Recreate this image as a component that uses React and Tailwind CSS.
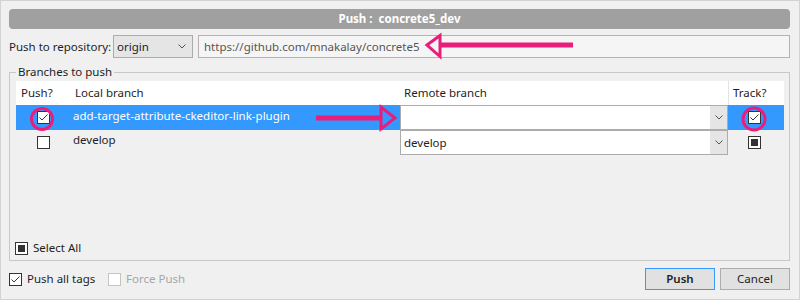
const PINK = '#e91e7b'

function Chevron() {
  return (
    <svg width="8" height="5" viewBox="0 0 8 5" className="block">
      <path d="M0.5 0.5 L4 4 L7.5 0.5" fill="none" stroke="#555" strokeWidth="1" />
    </svg>
  )
}

// Win10-style 13px checkbox: state = 'on' | 'off' | 'mixed'
function Check({ state = 'off', disabled = false }) {
  return (
    <span
      className={`relative w-[13px] h-[13px] shrink-0 border bg-white flex items-center justify-center ${
        disabled ? 'border-[#c4c4c4]' : 'border-[#333]'
      }`}
    >
      {state === 'on' && (
        <svg width="11" height="11" viewBox="0 0 11 11" className="block">
          <path d="M1.5 5.5 L4 8 L9.5 2.5" fill="none" stroke="#333" strokeWidth="1" />
        </svg>
      )}
      {state === 'mixed' && <span className="w-[7px] h-[7px] bg-[#333]" />}
    </span>
  )
}

function Combo({ value }) {
  return (
    <div className="h-full flex border border-[#acacac] bg-white">
      <div className="flex-1 flex items-center pl-[3px]">{value}</div>
      <div className="w-[17px] bg-[#e5e5e5] flex items-center justify-center">
        <Chevron />
      </div>
    </div>
  )
}

export default function App() {
  return (
    <div className="relative w-[800px] h-[300px] bg-[#f0f0f0] border border-[#d2d2d2] pl-[8px] pr-[9px] pt-[8px] text-[11.5px] leading-[16px] text-[#1e1e1e] whitespace-nowrap font-['Noto_Sans',sans-serif]">
      {/* Title */}
      <div className="h-[20px] rounded-[4px] bg-[#a0a0a0] flex items-center justify-center text-white font-bold whitespace-pre">
        {'Push :  concrete5_dev'}
      </div>

      {/* Repository row */}
      <div className="mt-[6px] h-[23px] flex items-center">
        <span className="w-[104px]">Push to repository:</span>
        <div className="w-[80px] h-full border border-[#acacac] bg-[#e5e5e5] flex items-center justify-between pl-[3px] pr-[6px]">
          <span>origin</span>
          <Chevron />
        </div>
        <div className="flex-1 ml-[5px] h-full border border-[#b4b4b4] bg-[#f5f5f5] flex items-center pl-[5px] text-[#555]">
          https://github.com/mnakalay/concrete5
        </div>
      </div>

      {/* Branches group */}
      <fieldset className="mt-[6px] h-[197px] border border-[#c8c8c8] pl-[6px] pr-[5px] pb-[6px]">
        <legend className="px-[2px]">Branches to push</legend>
        <div className="h-[180px] flex flex-col pt-px">
          <div className="h-[24px] bg-white flex items-center">
            <div className="w-[54px] pl-[5px]">Push?</div>
            <div className="w-[330px] pl-[5px]">Local branch</div>
            <div className="w-[328px] pl-[4px]">Remote branch</div>
            <div className="flex-1 h-full border-l border-[#e3e3e3] flex items-center pl-[4px]">Track?</div>
          </div>

          <div className="h-[25px] flex">
            <div className="w-[54px] bg-[#3399ff] flex items-center justify-center">
              <Check state="on" />
            </div>
            <div className="w-[330px] bg-[#3399ff] text-white flex items-center pl-[3px] pb-[3px]">
              add-target-attribute-ckeditor-link-plugin
            </div>
            <div className="w-[328px]">
              <Combo value="" />
            </div>
            <div className="flex-1 bg-[#3399ff] flex items-center justify-center pr-[3px]">
              <Check state="on" />
            </div>
          </div>

          <div className="h-[25px] flex">
            <div className="w-[54px] flex items-center justify-center">
              <Check />
            </div>
            <div className="w-[330px] flex items-center pl-[3px] pb-[5px]">develop</div>
            <div className="w-[328px]">
              <Combo value="develop" />
            </div>
            <div className="flex-1 flex items-center justify-center pr-[3px]">
              <Check state="mixed" />
            </div>
          </div>

          <div className="flex-1" />
          <div className="flex items-center gap-[5px] -ml-px mb-[4px]">
            <Check state="mixed" />
            <span>Select All</span>
          </div>
        </div>
      </fieldset>

      {/* Bottom bar */}
      <div className="mt-[7px] h-[22px] flex items-center">
        <div className="w-[99px] flex items-center gap-[5px]">
          <Check state="on" />
          <span>Push all tags</span>
        </div>
        <div className="flex items-center gap-[5px] text-[#a6a6a6]">
          <Check disabled />
          <span>Force Push</span>
        </div>
        <button className="ml-auto w-[70px] h-full border border-[#3399ff] bg-[#e1e1e1] font-semibold text-[#222]">
          Push
        </button>
        <button className="ml-[5px] w-[70px] h-full border border-[#adadad] bg-[#e1e1e1] text-[#222]">
          Cancel
        </button>
      </div>

      {/* Annotations drawn over the dialog */}
      <svg className="absolute -left-px -top-px w-[800px] h-[300px] pointer-events-none" viewBox="0 0 800 300">
        <rect x="440" y="42.5" width="133" height="5" fill={PINK} />
        <polygon points="427,45 440,35.5 440,56.5" fill="none" stroke={PINK} strokeWidth="3" strokeLinejoin="miter" />
        <rect x="316" y="115.5" width="65" height="5" fill={PINK} />
        <polygon points="395,118 381,107 381,129" fill="none" stroke={PINK} strokeWidth="3" />
        <circle cx="42" cy="119" r="10.5" fill="none" stroke={PINK} strokeWidth="3" />
        <circle cx="754" cy="119" r="11" fill="none" stroke={PINK} strokeWidth="3" />
      </svg>
    </div>
  )
}
